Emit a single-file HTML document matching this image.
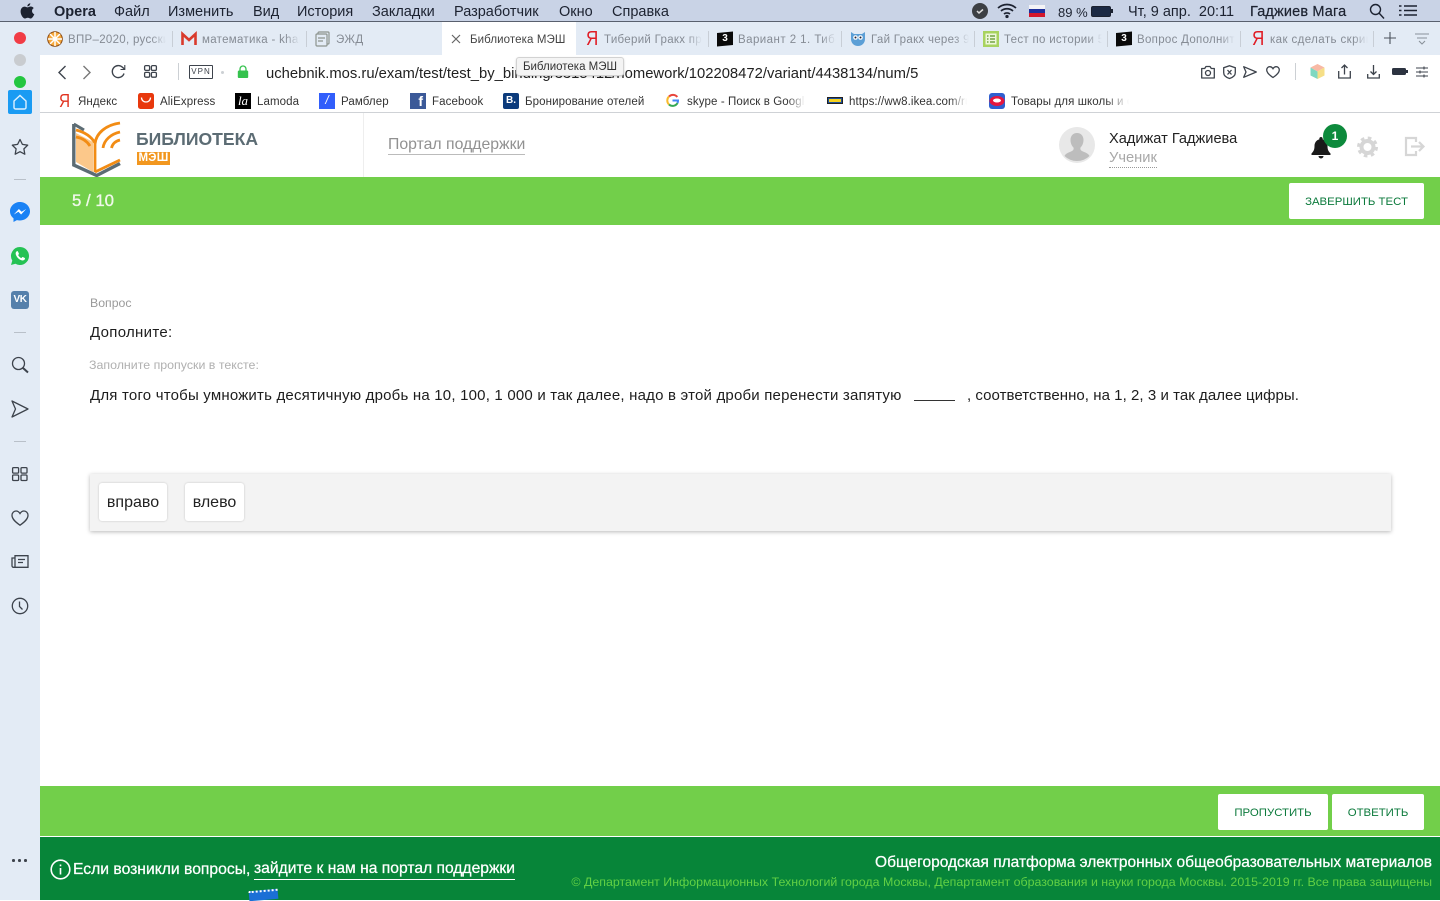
<!DOCTYPE html>
<html lang="ru"><head><meta charset="utf-8"><title>Библиотека МЭШ</title>
<style>
html,body{margin:0;padding:0;width:1440px;height:900px;overflow:hidden;background:#fff;font-family:"Liberation Sans","Noto Sans CJK SC",sans-serif;color:#222}
.a{position:absolute;white-space:nowrap}
svg{position:absolute;overflow:visible}
.m{top:4px;font-size:14.5px;line-height:17px;color:#1c2230}
.t{top:32px;font-size:11.5px;line-height:16px;color:#858b94;overflow:hidden;letter-spacing:.3px;-webkit-mask-image:linear-gradient(90deg,#000 85%,transparent);mask-image:linear-gradient(90deg,#000 85%,transparent)}
.s{position:absolute;top:31px;width:1px;height:16px;background:#c8ced6}
.b{top:95px;font-size:11.5px;line-height:14px;color:#333;letter-spacing:.1px}
.ic{fill:none;stroke:#3d434c;stroke-width:1.3}
.btn{position:absolute;background:#fff;border-radius:2px;color:#0c7a3c;font-size:11.4px;text-align:center}
.ya{top:28px;font-size:20px;line-height:22px;color:#e01b24;transform:scaleX(.85);transform-origin:left}
</style></head><body>

<!-- mac menu bar -->
<div class="a" style="left:0;top:0;width:1440px;height:22px;background:#c9d3e6;border-bottom:1px solid #59606e;box-sizing:border-box"></div>
<svg style="left:20px;top:3px" width="15" height="16" viewBox="0 0 15 16"><path fill="#1c2230" d="M10.3 0.3c.1 1.6-1.3 3.2-2.9 3.1C7.2 1.9 8.7 .4 10.3 .3zM7.5 4.4c.8 0 1.7-.9 3.2-.9 1.100 0 2.300.6 3 1.600-2.500 1.500-2.100 5 .6 6.100-.7 1.800-2.200 4.300-3.800 4.300-1 0-1.400-.7-2.700-.7s-1.800.7-2.800.7C3 15.500.6 11.700.6 8.600.6 5.500 2.500 3.600 4.500 3.600c1.300 0 2.200.8 3 .8z"/></svg>
<div class="a m" style="left:54px;font-weight:bold">Opera</div>
<div class="a m" style="left:114px">Файл</div>
<div class="a m" style="left:168px">Изменить</div>
<div class="a m" style="left:253px">Вид</div>
<div class="a m" style="left:297px">История</div>
<div class="a m" style="left:372px">Закладки</div>
<div class="a m" style="left:454px">Разработчик</div>
<div class="a m" style="left:559px">Окно</div>
<div class="a m" style="left:612px">Справка</div>
<svg style="left:972px;top:3px" width="16" height="16"><circle cx="8" cy="8" r="8" fill="#3c3f44"/><path d="M5 8l2 2 4-3.500" stroke="#ddd" stroke-width="1.500" fill="none"/></svg>
<svg style="left:997px;top:3px" width="20" height="15" viewBox="0 0 20 15" fill="none" stroke="#1c2230" stroke-width="1.700"><path d="M1 5c5-4.700 13-4.700 18 0M4 8c3.300-3 8.700-3 12 0M7 11c1.700-1.400 4.300-1.400 6 0"/><circle cx="10" cy="13.500" r=".8" fill="#1c2230"/></svg>
<div class="a" style="left:1029px;top:5px;width:16px;height:4px;background:#f4f4f6"></div>
<div class="a" style="left:1029px;top:9px;width:16px;height:4px;background:#1d2f9c"></div>
<div class="a" style="left:1029px;top:13px;width:16px;height:4px;background:#d3172b"></div>
<div class="a m" style="left:1058px;font-size:13px">89 %</div>
<div class="a" style="left:1091px;top:6px;width:18px;height:9px;border:1px solid #1c2230;border-radius:2px;background:#1c2a44;box-sizing:content-box"></div>
<div class="a" style="left:1111px;top:9px;width:1.500px;height:4px;background:#1c2230"></div>
<div class="a m" style="left:1128px">Чт, 9 апр.&nbsp; 20:11</div>
<div class="a m" style="left:1250px;letter-spacing:.15px;-webkit-text-stroke:.2px #1c2230">Гаджиев Мага</div>
<svg style="left:1369px;top:3px" width="16" height="16" fill="none" stroke="#1c2230" stroke-width="1.400"><circle cx="6.500" cy="6.500" r="5"/><path d="M10 10l5 5.500"/></svg>
<svg style="left:1399px;top:4px" width="18" height="13" fill="none" stroke="#1c2230" stroke-width="1.600"><path d="M5 2h13M5 6.500h13M5 11h13M0 2h2.500M0 6.500h2.500M0 11h2.500"/></svg>

<!-- left rail -->
<div class="a" style="left:0;top:22px;width:40px;height:878px;background:#e3ebf5"></div>
<div class="a" style="left:14px;top:32px;width:12px;height:12px;border-radius:50%;background:#f13c45"></div>
<div class="a" style="left:14px;top:54px;width:12px;height:12px;border-radius:50%;background:#c9ccd0"></div>
<div class="a" style="left:14px;top:76px;width:12px;height:12px;border-radius:50%;background:#23c640"></div>
<div class="a" style="left:8px;top:90px;width:24px;height:24px;border-radius:2px;background:#1a9bf3"></div>
<svg style="left:8px;top:90px" width="24" height="24" fill="none" stroke="#dff1ff" stroke-width="1.400"><path d="M6 11l6-5.500 6 5.500v6.500a1.500 1.500 0 0 1-1.500 1.500h-9A1.500 1.500 0 0 1 6 17.500z"/></svg>
<svg class="ic" style="left:11px;top:138px" width="18" height="18" viewBox="0 0 18 18"><path d="M9 1.500l2.400 4.900 5.300.8-3.800 3.700.9 5.300L9 13.700l-4.800 2.500.9-5.300L1.300 7.200l5.300-.8z" stroke-linejoin="round"/></svg>
<div class="a" style="left:14px;top:179px;width:12px;height:1px;background:#b9c0c9"></div>
<svg style="left:10px;top:202px" width="20" height="20" viewBox="0 0 20 20"><path fill="#1a82f5" d="M10 0C4.500 0 0 4.100 0 9.300c0 2.900 1.400 5.400 3.500 7V20l3.400-1.900c1 .3 2 .4 3.100.4 5.500 0 10-4.100 10-9.200S15.500 0 10 0z"/><path fill="#fff" d="M3.800 12.500l5.100-5.500 2.700 2.700 4.600-2.700-5.100 5.500-2.700-2.700z"/></svg>
<svg style="left:11px;top:247px" width="18" height="18" viewBox="0 0 18 18"><path fill="#25c254" d="M9 0a9 9 0 0 0-7.700 13.600L0 18l4.500-1.200A9 9 0 1 0 9 0z"/><path fill="#fff" d="M5.800 4.200c-.9.500-1.500 2-.9 3.600 1 2.700 3.100 4.800 5.500 5.500 1.400.4 2.900 0 3.400-1 .3-.6.200-1.100 0-1.300l-2-1c-.3-.1-.5 0-.7.200l-.7.900c-1.500-.5-2.600-1.600-3.300-3.100l.7-.7c.2-.2.200-.4.100-.7L6.900 4.400c-.2-.4-.6-.4-1.100-.2z"/></svg>
<div class="a" style="left:11px;top:291px;width:18px;height:18px;border-radius:3px;background:#5580ab"></div>
<div class="a" style="left:11px;top:293px;width:18px;text-align:center;color:#fff;font-size:10px;line-height:13px;font-weight:bold;letter-spacing:-.5px">VK</div>
<div class="a" style="left:14px;top:332px;width:12px;height:1px;background:#b9c0c9"></div>
<svg class="ic" style="left:11px;top:356px" width="18" height="18"><circle cx="7.500" cy="7.500" r="6"/><path d="M12 12l5 4.500" stroke-width="2"/></svg>
<svg class="ic" style="left:11px;top:400px" width="18" height="18"><path d="M1 1l16 8-16 8 3.500-8z" stroke-linejoin="round"/></svg>
<div class="a" style="left:14px;top:441px;width:12px;height:1px;background:#b9c0c9"></div>
<svg class="ic" style="left:12px;top:467px" width="16" height="14"><rect x=".6" y=".6" width="6" height="5.500" rx="1"/><rect x="9" y=".6" width="6" height="5.500" rx="1"/><rect x=".6" y="8" width="6" height="5.500" rx="1"/><rect x="9" y="8" width="6" height="5.500" rx="1"/></svg>
<svg class="ic" style="left:11px;top:510px" width="18" height="16"><path d="M9 15.200C3 11 1 8.300 1 5.300 1 2.800 3 1 5 1c1.700 0 3 .9 4 2.500C10 1.900 11.300 1 13 1c2 0 4 1.800 4 4.300 0 3-2 5.700-8 9.900z"/></svg>
<svg class="ic" style="left:11px;top:555px" width="18" height="14"><path d="M4 .7h13v11.600H2.500A1.500 1.500 0 0 1 1 10.800V3h3zM4 3v9M7 4.500h7M7 7.500h5"/></svg>
<svg class="ic" style="left:11px;top:597px" width="18" height="18"><circle cx="9" cy="9" r="7.700"/><path d="M8.500 4.500v5l3 3"/></svg>
<div class="a" style="left:12px;top:859px;width:2.500px;height:2.500px;border-radius:50%;background:#3d434c;box-shadow:6px 0 #3d434c,12px 0 #3d434c"></div>

<!-- tab bar -->
<div class="a" style="left:40px;top:22px;width:1400px;height:33px;background:#e3ebf5"></div>
<div class="a" style="left:442px;top:22px;width:134px;height:33px;background:#fff"></div>

<svg style="left:47px;top:31px" width="16" height="16"><circle cx="8" cy="8" r="7.300" fill="#f7a93c" stroke="#8a4a12"/><path d="M8 1v14M1 8h14M3 3l10 10M13 3L3 13" stroke="#fff" stroke-width="1.500"/></svg>
<div class="a t" style="left:68px;width:98px">ВПР–2020, русский</div>
<div class="s" style="left:172px"></div>
<svg style="left:181px;top:32px" width="16" height="14"><path d="M1.500 13V2L8 8l6.500-6v11" fill="none" stroke="#d93a2c" stroke-width="2.600"/></svg>
<div class="a t" style="left:202px;width:98px">математика - khan</div>
<div class="s" style="left:306px"></div>
<svg style="left:315px;top:31px" width="16" height="16" fill="none" stroke="#8d948e" stroke-width="1.200"><rect x="3" y="1" width="11" height="12" rx="1"/><rect x="1" y="3" width="11" height="12" rx="1" fill="#e3ebf5"/><path d="M3 7h7M3 10h5" /></svg>
<div class="a t" style="left:336px;width:60px">ЭЖД</div>
<svg style="left:451px;top:34px" width="10" height="10" fill="none" stroke="#666" stroke-width="1.200"><path d="M1 1l8 8M9 1L1 9"/></svg>
<div class="a t" style="left:470px;width:100px;color:#444;letter-spacing:.1px;-webkit-mask-image:none;mask-image:none">Библиотека МЭШ</div>
<div class="a ya" style="left:586px">Я</div>
<div class="a t" style="left:604px;width:98px">Тиберий Гракх правил</div>
<div class="s" style="left:708px"></div>
<svg style="left:717px;top:31px" width="16" height="16"><path d="M0 2l16-1.500V14L0 15.500z" fill="#0a0a0a"/></svg>
<div class="a" style="left:717px;top:32px;width:16px;text-align:center;color:#fff;font:bold 10px/14px 'Liberation Sans',sans-serif">3</div>
<div class="a t" style="left:738px;width:98px;letter-spacing:.45px">Вариант 2 1. Тиберий</div>
<div class="s" style="left:841px"></div>
<svg style="left:850px;top:31px" width="16" height="16"><path d="M1 1l3 2h8l3-2v7c0 4-3 7-7 7s-7-3-7-7z" fill="#5c9fd6"/><circle cx="5.500" cy="6.500" r="2.300" fill="#fff"/><circle cx="10.500" cy="6.500" r="2.300" fill="#fff"/><circle cx="5.500" cy="6.500" r="1" fill="#223"/><circle cx="10.500" cy="6.500" r="1" fill="#223"/></svg>
<div class="a t" style="left:871px;width:98px">Гай Гракх через 9 лет</div>
<div class="s" style="left:974px"></div>
<div class="a" style="left:983px;top:31px;width:16px;height:16px;background:#a8d35f;box-sizing:border-box"></div>
<svg style="left:983px;top:31px" width="16" height="16"><rect x="2.500" y="2.500" width="11" height="11" fill="#eef7dc"/><path d="M4 5h1.500M7 5h5M4 8h1.500M7 8h5M4 11h1.500M7 11h5" stroke="#5c9426" stroke-width="1.300"/></svg>
<div class="a t" style="left:1004px;width:98px">Тест по истории 5 кл</div>
<div class="s" style="left:1107px"></div>
<svg style="left:1116px;top:31px" width="16" height="16"><path d="M0 2l16-1.500V14L0 15.500z" fill="#0a0a0a"/></svg>
<div class="a" style="left:1116px;top:32px;width:16px;text-align:center;color:#fff;font:bold 10px/14px 'Liberation Sans',sans-serif">3</div>
<div class="a t" style="left:1137px;width:98px">Вопрос Дополните</div>
<div class="s" style="left:1240px"></div>
<div class="a ya" style="left:1252px">Я</div>
<div class="a t" style="left:1270px;width:98px;letter-spacing:.4px">как сделать скрин</div>
<div class="s" style="left:1373px"></div>
<svg style="left:1384px;top:32px" width="12" height="12" fill="none" stroke="#4b525c" stroke-width="1.100"><path d="M6 0v12M0 6h12"/></svg>
<svg style="left:1415px;top:33px" width="14" height="12" fill="none" stroke="#8a919a" stroke-width="1.100"><path d="M0 1h14M2 5h10M4 8l3 3 3-3"/></svg>

<!-- address bar -->
<div class="a" style="left:40px;top:55px;width:1400px;height:58px;background:#fff;border-bottom:1px solid #cfd2d6;box-sizing:border-box"></div>
<svg style="left:57px;top:65px" width="10" height="15" fill="none" stroke="#3d434c" stroke-width="1.400"><path d="M8.500 1L2 7.500 8.500 14"/></svg>
<svg style="left:82px;top:65px" width="10" height="15" fill="none" stroke="#777" stroke-width="1.400"><path d="M1.500 1L8 7.500 1.500 14"/></svg>
<svg style="left:111px;top:64px" width="15" height="15" fill="none" stroke="#3d434c" stroke-width="1.400"><path d="M13 9.500A6 6 0 1 1 11.500 3.300L13.500 5"/><path d="M13.800 1v4.500H9.500" stroke-width="1.100"/></svg>
<svg class="ic" style="left:144px;top:65px" width="13" height="13"><rect x=".6" y=".6" width="5" height="4.800" rx="1.200"/><rect x="7.400" y=".6" width="5" height="4.800" rx="1.200"/><rect x=".6" y="7.400" width="5" height="4.800" rx="1.200"/><rect x="7.400" y="7.400" width="5" height="4.800" rx="1.200"/></svg>
<div class="a" style="left:178px;top:63px;width:1px;height:17px;background:#ccd0d4"></div>
<div class="a" style="left:189px;top:65px;width:22px;height:12px;border:1px solid #3d434c;border-radius:1px;font-size:8px;line-height:12px;text-align:center;letter-spacing:1px;color:#3d434c">VPN</div>
<div class="a" style="left:221px;top:71px;width:3px;height:3px;border-radius:50%;background:#ccd0d4"></div>
<svg style="left:237px;top:65px" width="12" height="13"><path d="M3 6V4a3 3 0 0 1 6 0v2" fill="none" stroke="#35c24e" stroke-width="1.300"/><rect x=".8" y="5.500" width="10.400" height="7.500" rx="1.300" fill="#35c24e"/></svg>
<div class="a" style="left:266px;top:65px;font-size:14.8px;line-height:18px;color:#222">uchebnik.mos.ru/exam/test/test_by_binding/3315412/homework/102208472/variant/4438134/num/5</div>
<div class="a" style="left:516px;top:57px;width:108px;height:19px;background:#f4f4f4;border:1px solid #d2d2d2;border-radius:3px;box-shadow:0 1px 2px rgba(0,0,0,.18);box-sizing:border-box;font-size:11.5px;line-height:19px;text-align:center;color:#333">Библиотека МЭШ</div>
<svg class="ic" style="left:1201px;top:65px" width="14" height="14"><path d="M.7 3.500h3L5 1.500h4l1.300 2h3v9.500H.7z" stroke-linejoin="round"/><circle cx="7" cy="8" r="2.500"/></svg>
<svg class="ic" style="left:1223px;top:65px" width="13" height="14"><path d="M6.500.7l5.800 2v5c0 2.700-2.500 4.700-5.800 5.800C3.200 12.400.7 10.400.7 7.700v-5zM4.500 5l4 4.500M8.500 5l-4 4.500"/></svg>
<svg class="ic" style="left:1243px;top:66px" width="14" height="12"><path d="M.7.7L13.300 6 .7 11.300 3 6z" stroke-linejoin="round"/></svg>
<svg class="ic" style="left:1266px;top:66px" width="14" height="12"><path d="M7 11.500C2.500 8.500.7 6.500.7 4 .7 2 2.200.7 3.800.7c1.300 0 2.400.7 3.200 2 .8-1.300 1.900-2 3.200-2C11.800.7 13.300 2 13.300 4c0 2.500-1.800 4.500-6.300 7.500z"/></svg>
<div class="a" style="left:1295px;top:63px;width:1px;height:17px;background:#ccd0d4"></div>
<svg style="left:1310px;top:64px" width="15" height="15"><path d="M7.500 0l7 3.500-7 4-7-4z" fill="#f8b9a5"/><path d="M.5 3.500l7 4V15l-7-3.500z" fill="#7fd8c1"/><path d="M14.500 3.500l-7 4V15l7-3.500z" fill="#f6df87"/></svg>
<svg class="ic" style="left:1338px;top:64px" width="13" height="15"><path d="M.7 7v7h11.600V7M6.500 10.500V1M3.500 4l3-3 3 3"/></svg>
<svg class="ic" style="left:1367px;top:64px" width="13" height="15"><path d="M.7 10v4h11.600v-4M6.500 1v9.500M3.500 7.500l3 3 3-3"/></svg>
<div class="a" style="left:1392px;top:68px;width:14px;height:7px;border-radius:1.500px;background:#2c3340"></div>
<div class="a" style="left:1406px;top:70px;width:2px;height:3px;background:#2c3340"></div>
<svg style="left:1416px;top:66px" width="12" height="12" fill="none" stroke="#3d434c" stroke-width="1.100"><path d="M0 2h12M0 6h12M0 10h12M8 .5v3M4 4.500v3M8 8.500v3"/></svg>

<!-- bookmarks -->
<div class="a" style="left:59px;top:91px;font-size:18px;line-height:20px;color:#e0321f;transform:scaleX(.85);transform-origin:left">Я</div>
<div class="a b" style="left:78px">Яндекс</div>
<svg style="left:138px;top:93px" width="16" height="16"><rect width="16" height="16" rx="2.500" fill="#e8380d"/><path d="M3.500 4.500c0 6 9 6 9 0" fill="none" stroke="#fff" stroke-width="1.300"/></svg>
<div class="a b" style="left:160px">AliExpress</div>
<div class="a" style="left:235px;top:93px;width:16px;height:16px;background:#000;color:#fff;font:italic 13px/15px 'Liberation Serif',serif;text-align:center">la</div>
<div class="a b" style="left:257px">Lamoda</div>
<div class="a" style="left:319px;top:93px;width:16px;height:16px;background:#315efb;color:#fff;font:italic 12px/15px 'Liberation Sans',sans-serif;text-align:center">/</div>
<div class="a b" style="left:341px">Рамблер</div>
<div class="a" style="left:410px;top:93px;width:16px;height:16px;background:#3b5998;color:#fff;font:bold 14px/17px 'Liberation Sans',sans-serif;text-align:right;padding-right:0;box-sizing:border-box;overflow:hidden"><span style="margin-right:3px">f</span></div>
<div class="a b" style="left:432px">Facebook</div>
<div class="a" style="left:503px;top:93px;width:16px;height:16px;background:#0c3b7c;border-radius:2px;color:#fff;font:bold 10px/16px 'Liberation Sans',sans-serif;text-align:center">B.</div>
<div class="a b" style="left:525px">Бронирование отелей</div>
<svg style="left:666px;top:94px" width="13" height="13" fill="none" stroke-width="2"><path d="M11.300 3A5.500 5.500 0 0 0 3 2.500" stroke="#e8453c"/><path d="M3 2.500a5.500 5.500 0 0 0 0 8" stroke="#f9bb2d"/><path d="M3 10.500a5.500 5.500 0 0 0 8.500-1.500" stroke="#34a853"/><path d="M6.500 6.500H12c0 1-.2 2-.5 2.500" stroke="#4285f4"/></svg>
<div class="a b" style="left:687px;width:118px;overflow:hidden;-webkit-mask-image:linear-gradient(90deg,#000 85%,transparent);mask-image:linear-gradient(90deg,#000 85%,transparent)">skype - Поиск в Google</div>
<div class="a" style="left:827px;top:97px;width:16px;height:7px;background:#1e4f9c;border:1px solid #222;box-sizing:border-box"></div>
<div class="a" style="left:829px;top:99px;width:12px;height:3px;background:#f6d21f"></div>
<div class="a b" style="left:849px;width:118px;overflow:hidden;-webkit-mask-image:linear-gradient(90deg,#000 85%,transparent);mask-image:linear-gradient(90deg,#000 85%,transparent)">https://ww8.ikea.com/ru</div>
<svg style="left:989px;top:93px" width="16" height="16"><rect width="16" height="16" rx="3" fill="#2f5fd0"/><ellipse cx="8" cy="8" rx="7.500" ry="5" fill="#e5173f"/><ellipse cx="8" cy="7.500" rx="4" ry="2" fill="#fff"/></svg>
<div class="a b" style="left:1011px;width:118px;overflow:hidden;-webkit-mask-image:linear-gradient(90deg,#000 80%,transparent);mask-image:linear-gradient(90deg,#000 80%,transparent)">Товары для школы и офиса</div>

<!-- page header -->
<div class="a" style="left:363px;top:113px;width:1px;height:64px;background:#eee"></div>
<svg style="left:72px;top:121px" width="50" height="56" viewBox="0 0 50 56">
<path d="M4 12l17 9v30L4 41z" fill="#fcc88a"/>
<path d="M1.800 3v41L24.700 54.500 48 42.500" fill="none" stroke="#5c6c74" stroke-width="3.400"/>
<path d="M1.800 3L12 9" fill="none" stroke="#5c6c74" stroke-width="3"/>
<path d="M4 9c8 2 15 6 19 13M4 16c6 1 11 4 14 9M23 51V23C24 12 34 4 48 2M31 27c1-8 8-14 17-16M39.500 27c1-4 4-7 8.500-8M23 51l25-12" fill="none" stroke="#f28c14" stroke-width="2.800"/>
</svg>
<div class="a" style="left:136px;top:129px;font-size:17.6px;line-height:20px;font-weight:bold;color:#5c6c74">БИБЛИОТЕКА</div>
<div class="a" style="left:137px;top:152px;width:33px;height:13px;background:#f2971f;color:#fff;font-size:11.5px;line-height:13px;font-weight:bold;text-align:center;letter-spacing:.2px">МЭШ</div>
<div class="a" style="left:388px;top:136px;font-size:15.8px;line-height:18px;color:#919191;border-bottom:1px solid #bbb">Портал поддержки</div>
<svg style="left:1059px;top:127px" width="36" height="37" viewBox="0 0 36 37"><circle cx="18" cy="18" r="18" fill="#e8e8e8"/><path d="M18 6c4 0 6.500 3 6.500 7 0 3-1.300 6-3 7.500-.5 2 .3 3 2.500 4 3 1.200 5.500 2.200 6.500 4.500a18 18 0 0 1-25 0c1-2.300 3.500-3.300 6.500-4.500 2.200-1 3-2 2.500-4-1.700-1.500-3-4.500-3-7.500 0-4 2.500-7 6.500-7z" fill="#bdbdbd"/></svg>
<div class="a" style="left:1109px;top:130px;font-size:14.6px;line-height:18px;color:#222">Хадижат Гаджиева</div>
<div class="a" style="left:1109px;top:150px;font-size:14.7px;line-height:17px;color:#a8a8a8;border-bottom:1px dotted #999">Ученик</div>
<svg style="left:1311px;top:137px" width="20" height="22" viewBox="0 0 20 22"><path d="M10 0c1 0 1.700.7 1.700 1.700v.7c3 .8 4.800 3.400 4.800 6.600 0 3.500.7 5 3 7.500v1.500H.5V16.500c2.300-2.500 3-4 3-7.500 0-3.200 1.800-5.800 4.800-6.600v-.7C8.300.7 9 0 10 0zM7.500 19h5a2.500 2.500 0 0 1-5 0z" fill="#1a1a1a"/></svg>
<div class="a" style="left:1323px;top:124px;width:24px;height:24px;border-radius:50%;background:#0d8a3c;color:#fff;font-size:12px;font-weight:bold;line-height:24px;text-align:center">1</div>
<svg style="left:1357px;top:136px" width="21" height="22" viewBox="0 0 21 22" fill="none"><circle cx="10.500" cy="11" r="6" stroke="#d6d6d6" stroke-width="4"/><circle cx="10.500" cy="11" r="8.800" stroke="#d6d6d6" stroke-width="3.400" stroke-dasharray="3.500 3.410"/></svg>
<svg style="left:1404px;top:136px" width="21" height="21" fill="none" stroke="#d6d6d6" stroke-width="2.200"><path d="M12 6V2H2v17h10v-4M7 10.500h12M15 6l4.500 4.500L15 15"/></svg>

<!-- green bar -->
<div class="a" style="left:40px;top:177px;width:1400px;height:48px;background:#72cf4a"></div>
<div class="a" style="left:72px;top:191px;font-size:16.8px;line-height:19px;color:#f0f8ea;-webkit-text-stroke:.35px #f0f8ea">5 / 10</div>
<div class="btn" style="left:1289px;top:183px;width:135px;height:36px;line-height:38px">ЗАВЕРШИТЬ ТЕСТ</div>

<!-- content -->
<div class="a" style="left:90px;top:296px;font-size:12.3px;line-height:14px;color:#9a9a9a">Вопрос</div>
<div class="a" style="left:90px;top:324px;font-size:15px;line-height:18px;color:#1d1d1d;letter-spacing:.3px">Дополните:</div>
<div class="a" style="left:89px;top:358px;font-size:12.4px;line-height:14px;color:#b0b0b0">Заполните пропуски в тексте:</div>
<div class="a" style="left:90px;top:387px;font-size:15px;line-height:18px;color:#1d1d1d;letter-spacing:.2px">Для того чтобы умножить десятичную дробь на 10, 100, 1 000 и так далее, надо в этой дроби перенести запятую</div>
<div class="a" style="left:914px;top:400px;width:41px;height:1px;background:#333"></div>
<div class="a" style="left:967px;top:387px;font-size:15px;line-height:18px;color:#1d1d1d;letter-spacing:.05px">, соответственно, на 1, 2, 3 и так далее цифры.</div>

<div class="a" style="left:90px;top:474px;width:1301px;height:57px;background:#f3f3f3;box-shadow:0 1px 4px rgba(0,0,0,.28)"></div>
<div class="a" style="left:99px;top:483px;width:68px;height:38px;background:#fff;border-radius:3px;box-shadow:0 0 2px rgba(0,0,0,.2);font-size:16px;line-height:39px;text-align:center;color:#222">вправо</div>
<div class="a" style="left:185px;top:483px;width:59px;height:38px;background:#fff;border-radius:3px;box-shadow:0 0 2px rgba(0,0,0,.2);font-size:16px;line-height:39px;text-align:center;color:#222">влево</div>

<!-- bottom -->
<div class="a" style="left:40px;top:786px;width:1400px;height:50px;background:#72cf4a"></div>
<div class="btn" style="left:1218px;top:794px;width:110px;height:36px;line-height:38px">ПРОПУСТИТЬ</div>
<div class="btn" style="left:1332px;top:794px;width:92px;height:36px;line-height:38px">ОТВЕТИТЬ</div>
<div class="a" style="left:40px;top:837px;width:1400px;height:63px;background:#078539"></div>
<svg style="left:50px;top:859px" width="21" height="21" fill="none" stroke="#fff" stroke-width="1.600"><circle cx="10.500" cy="10.500" r="9.300"/><path d="M10.500 9v6.500M10.500 5.500v1.800"/></svg>
<div class="a" style="left:73px;top:860px;font-size:15.7px;line-height:19px;color:#fff;-webkit-text-stroke:.25px #fff">Если возникли вопросы,</div>
<div class="a" style="left:254px;top:859px;font-size:15.65px;line-height:20px;color:#fff;border-bottom:1px solid #fff;-webkit-text-stroke:.25px #fff">зайдите к нам на портал поддержки</div>
<div class="a" style="left:249px;top:890px;width:29px;height:10px;background:#1b6fd6;border-top:2px dotted #fff;box-sizing:border-box;transform:rotate(-5deg)"></div>
<div class="a" style="right:8px;top:853px;font-size:15.5px;line-height:19px;color:#fff;-webkit-text-stroke:.25px #fff">Общегородская платформа электронных общеобразовательных материалов</div>
<div class="a" style="right:8px;top:875px;font-size:12.4px;line-height:15px;color:#62d044">© Департамент Информационных Технологий города Москвы, Департамент образования и науки города Москвы. 2015-2019 гг. Все права защищены</div>
</body></html>
